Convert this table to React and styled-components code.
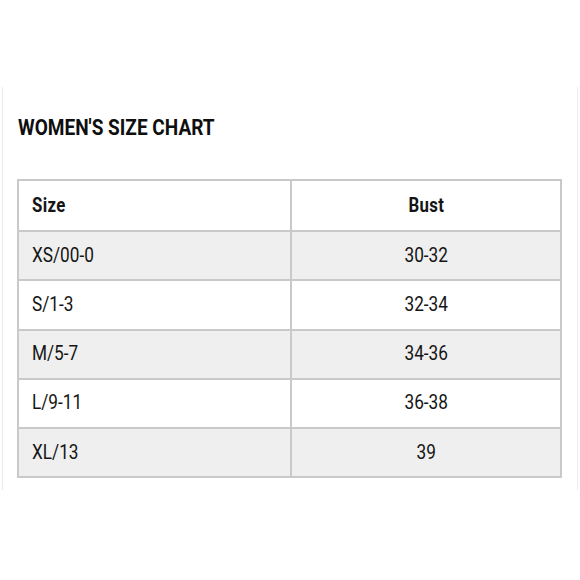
import React from "react";
import styled, { createGlobalStyle } from "styled-components";

const Global = createGlobalStyle`
  html, body { margin: 0; padding: 0; background: #ffffff; }
  body { font-family: Roboto, "Liberation Sans", sans-serif; color: #1a1a1a; }
`;

const Page = styled.div`
  width: 580px;
  height: 580px;
  padding-top: 87px;
  box-sizing: border-box;
`;

const Panel = styled.div`
  margin: 0 2px;
  height: 403px;
  border-left: 1px solid #ececec;
  border-right: 1px solid #ececec;
  padding: 30px 0 0 14px;
  box-sizing: border-box;
`;

const Title = styled.h2`
  margin: 0 0 40px 1px;
  font-size: 22px;
  font-weight: 700;
  line-height: 22px;
  color: #0f0f0f;
  transform: scaleX(0.865);
  transform-origin: left center;
  white-space: nowrap;
`;

const Table = styled.div`
  width: 545px;
  border: 2px solid #c9c9c9;
  box-sizing: border-box;
`;

const Row = styled.div`
  display: grid;
  grid-template-columns: 271px 1fr;
  height: 49.2px;
  background: ${(p) => (p.$shade ? "#efefef" : "#ffffff")};
  & + & { border-top: 2px solid #c9c9c9; }
  box-sizing: border-box;
`;

const Cell = styled.div`
  display: flex;
  align-items: center;
  justify-content: ${(p) => (p.$center ? "center" : "flex-start")};
  padding-left: ${(p) => (p.$center ? "0" : "13px")};
  padding-bottom: 2px;
  & + & { border-left: 2px solid #c9c9c9; }
`;

const Text = styled.span`
  display: inline-block;
  font-size: 20px;
  font-weight: ${(p) => (p.$head ? 700 : 400)};
  letter-spacing: ${(p) => (p.$head ? "0.4px" : "0")};
  color: #151515;
  transform: scaleX(${(p) => (p.$head ? 0.84 : 0.86)});
  transform-origin: ${(p) => (p.$center ? "center" : "left")} center;
  white-space: nowrap;
`;

const rows = [
  ["XS/00-0", "30-32"],
  ["S/1-3", "32-34"],
  ["M/5-7", "34-36"],
  ["L/9-11", "36-38"],
  ["XL/13", "39"],
];

export default function App() {
  return (
    <Page>
      <Global />
      <Panel>
        <Title>WOMEN'S SIZE CHART</Title>
        <Table>
          <Row>
            <Cell><Text $head>Size</Text></Cell>
            <Cell $center><Text $head $center>Bust</Text></Cell>
          </Row>
          {rows.map(([s, b], i) => (
            <Row key={s} $shade={i % 2 === 0}>
              <Cell><Text>{s}</Text></Cell>
              <Cell $center><Text $center>{b}</Text></Cell>
            </Row>
          ))}
        </Table>
      </Panel>
    </Page>
  );
}
